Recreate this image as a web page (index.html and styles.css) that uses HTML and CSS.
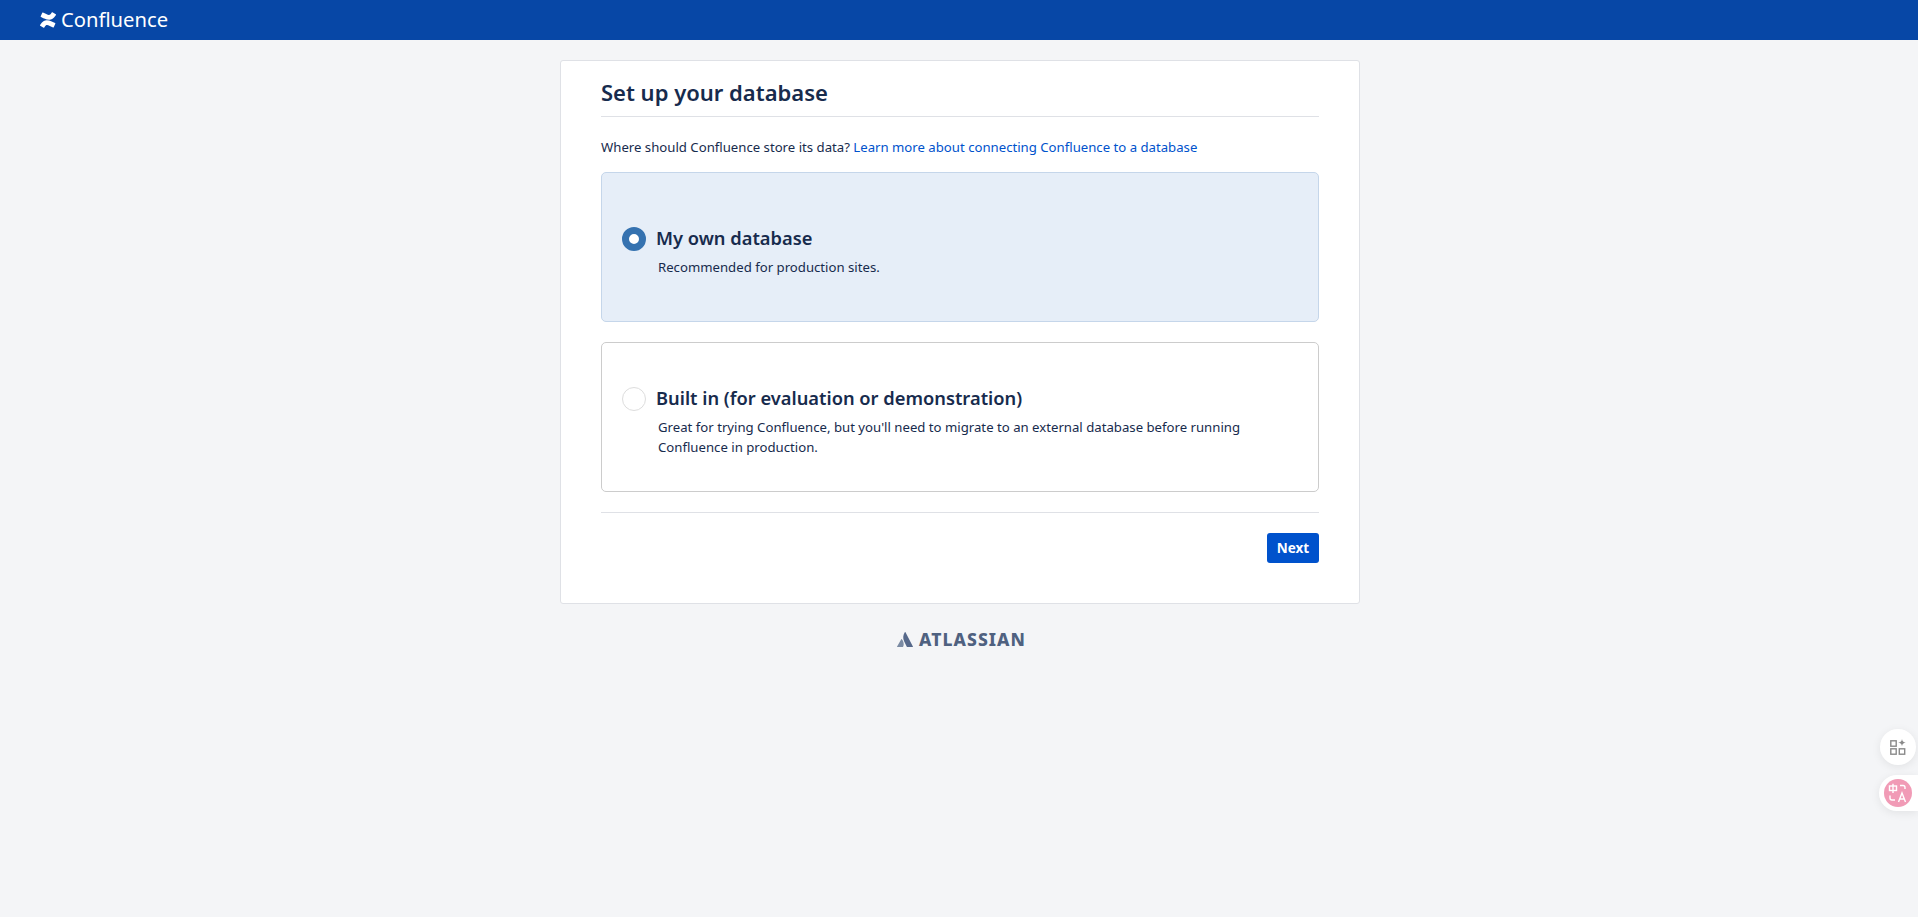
FILE: index.html
```html
<!DOCTYPE html>
<html lang="en">
<head>
  <meta charset="UTF-8" />
  <title>Set up your database - Confluence</title>
  <link rel="stylesheet" href="styles.css">
</head>
<body>
  <header class="topbar">
    <svg class="topbar-logo" width="16" height="16" viewBox="0 0 24 24">
      <path fill="#fff" d="M.87 18.257c-.248.382-.53.875-.763 1.245a.764.764 0 0 0 .255 1.04l4.965 3.054a.764.764 0 0 0 1.058-.26c.199-.332.454-.763.733-1.221 1.967-3.247 3.945-2.853 7.508-1.146l4.957 2.337a.764.764 0 0 0 1.028-.382l2.364-5.346a.764.764 0 0 0-.382-1 599.851 599.851 0 0 1-4.965-2.361C10.911 10.97 5.183 11.184.87 18.257z"/>
      <path fill="#fff" d="M23.131 5.743c.248-.382.53-.875.763-1.245a.764.764 0 0 0-.255-1.04L18.674.404a.764.764 0 0 0-1.058.26c-.199.332-.454.763-.733 1.221-1.967 3.247-3.945 2.853-7.508 1.146L4.428.694a.764.764 0 0 0-1.028.382L1.036 6.422a.764.764 0 0 0 .382 1c1.05.494 3.143 1.479 4.965 2.361 6.707 3.247 12.435 3.033 16.748-4.04z"/>
    </svg>
    <span class="topbar-name">Confluence</span>
  </header>

  <div class="page">
    <main class="setup-card">
      <h1 class="setup-title">Set up your database</h1>
      <p class="setup-intro">Where should Confluence store its data? <a href="#">Learn more about connecting Confluence to a database</a></p>

      <div class="option option-selected">
        <div class="option-head">
          <span class="radio radio-on"></span>
          <h2>My own database</h2>
        </div>
        <p>Recommended for production sites.</p>
      </div>

      <div class="option">
        <div class="option-head">
          <span class="radio"></span>
          <h2>Built in (for evaluation or demonstration)</h2>
        </div>
        <p>Great for trying Confluence, but you'll need to migrate to an external database before running Confluence in production.</p>
      </div>

      <div class="setup-actions">
        <button class="next-btn">Next</button>
      </div>
    </main>

    <footer class="brand">
      <svg width="17" height="15" viewBox="0 0 17 15">
        <path fill="#7a8aa3" d="M4.800 7.300c-.2-.3-.5-.2-.7.100L.1 14.400c-.2.300 0 .600.300.600h5.300c.2 0 .3-.1.400-.2 1.200-2.400.5-5.400-1.300-7.500Z"/>
        <path fill="#56688a" d="M7.800.3c-1.900 3-2 6.300-.7 8.900l2.700 5.500c.1.200.2.300.4.300h5.400c.3 0 .5-.3.300-.6L8.500.3c-.2-.3-.5-.3-.7 0Z"/>
      </svg>
      <span>ATLASSIAN</span>
    </footer>
  </div>

  <div class="float-btn float-tools">
    <svg width="16" height="16" viewBox="0 0 16 16">
      <g fill="none" stroke="#8a8a8a" stroke-width="1.400">
        <rect x=".8" y="1.800" width="5.400" height="5.400"/>
        <rect x=".8" y="9.800" width="5.400" height="5.400"/>
        <rect x="9.300" y="9.800" width="5.400" height="5.400"/>
      </g>
      <path fill="#8a8a8a" d="M12 0c.3 2.200 1.300 3.200 3.800 3.600-2.500.4-3.500 1.400-3.800 3.600-.3-2.200-1.300-3.200-3.800-3.600C10.700 3.200 11.700 2.200 12 0Z"/>
    </svg>
  </div>
  <div class="float-btn float-translate">
    <span class="translate-badge">
      <svg width="22" height="22" viewBox="0 0 22 22" fill="none" stroke="#fff" stroke-width="1.400">
        <rect x="2.500" y="4" width="7" height="4.500"/>
        <path d="M6 1.800v9.200M3 13.500v2.500c0 1.300.8 2 2 2h3M13 3.500h3c1.300 0 2 .7 2 2v1.500M11.500 20l3.500-9 3.500 9M12.700 17h4.600"/>
      </svg>
    </span>
  </div>
</body>
</html>
```

FILE: styles.css
```css
body {
  margin: 0;
  min-height: 917px;
  background-color: #f4f5f7;
  font-family: 'Noto Sans', 'Open Sans', sans-serif;
  color: #172b4d;
  font-size: 13.18px;
  overflow: hidden;
}

.topbar {
  height: 40px;
  background-color: #0747a6;
  color: white;
  display: flex;
  align-items: center;
  gap: 5px;
  padding-left: 40px;
}

.topbar-logo {
  flex: none;
  margin-top: -1px;
}

.topbar-name {
  font-size: 20.2px;
  line-height: 38px;
  margin-bottom: 2px;
}

.page {
  padding-left: 2px;
}

.setup-card {
  box-sizing: border-box;
  width: 800px;
  height: 544px;
  margin: 20px auto 0;
  padding: 0 40px;
  background-color: white;
  border: 1px solid #dfe1e6;
  border-radius: 3px;
}

.setup-title {
  box-sizing: border-box;
  margin: 0;
  height: 56px;
  line-height: 63px;
  font-size: 22px;
  font-weight: 600;
  border-bottom: 1px solid #dfe1e6;
}

.setup-intro {
  margin: 0;
  height: 55px;
  padding-top: 20px;
  box-sizing: border-box;
  line-height: 20px;
}

.setup-intro a {
  color: #0052cc;
  text-decoration: none;
}

.option {
  box-sizing: border-box;
  height: 150px;
  margin-bottom: 20px;
  padding: 9px 20px 0;
  display: flex;
  flex-direction: column;
  justify-content: center;
  border: 1.5px solid #ccc;
  border-radius: 5px;
}

.option-selected {
  background-color: #e6eef8;
  border-color: #c5d6ea;
}

.option-head {
  display: flex;
  align-items: center;
  gap: 10px;
}

.option h2 {
  margin: 0 0 2px;
  font-size: 18.3px;
  font-weight: 600;
  line-height: 22px;
}

.option p {
  margin: 6px 0 0 36px;
  line-height: 20px;
}

.radio {
  box-sizing: border-box;
  width: 24px;
  height: 24px;
  flex: none;
  background-color: white;
  border: 1.5px solid #dddddd;
  border-radius: 50%;
}

.radio-on {
  border: 7.5px solid #3572b0;
}

.setup-actions {
  border-top: 1px solid #dfe1e6;
  padding-top: 20px;
  display: flex;
  justify-content: flex-end;
}

.next-btn {
  width: 52px;
  height: 30px;
  padding: 0;
  background-color: #0052cc;
  color: white;
  border: none;
  border-radius: 3px;
  font-family: inherit;
  font-size: 13.5px;
  font-weight: 700;
}

.brand {
  margin-top: 23px;
  padding-left: 3px;
  display: flex;
  justify-content: center;
  align-items: center;
  gap: 5px;
  color: #4f6180;
  font-size: 17.5px;
  font-weight: 800;
  letter-spacing: 1.05px;
  line-height: 24px;
}

.float-btn {
  position: fixed;
  background-color: white;
  box-shadow: 0 2px 10px rgba(0,0,0,0.08);
  display: flex;
  align-items: center;
  justify-content: center;
}

.float-tools {
  right: 2px;
  top: 729px;
  width: 36px;
  height: 36px;
  border-radius: 50%;
}

.float-translate {
  right: 0;
  top: 775px;
  width: 39px;
  height: 36px;
  border-radius: 18px 0 0 18px;
  justify-content: flex-start;
  padding-left: 5px;
  box-sizing: border-box;
}

.translate-badge {
  width: 28px;
  height: 28px;
  border-radius: 50%;
  background-color: #f19bb6;
  display: flex;
  align-items: center;
  justify-content: center;
}
```
